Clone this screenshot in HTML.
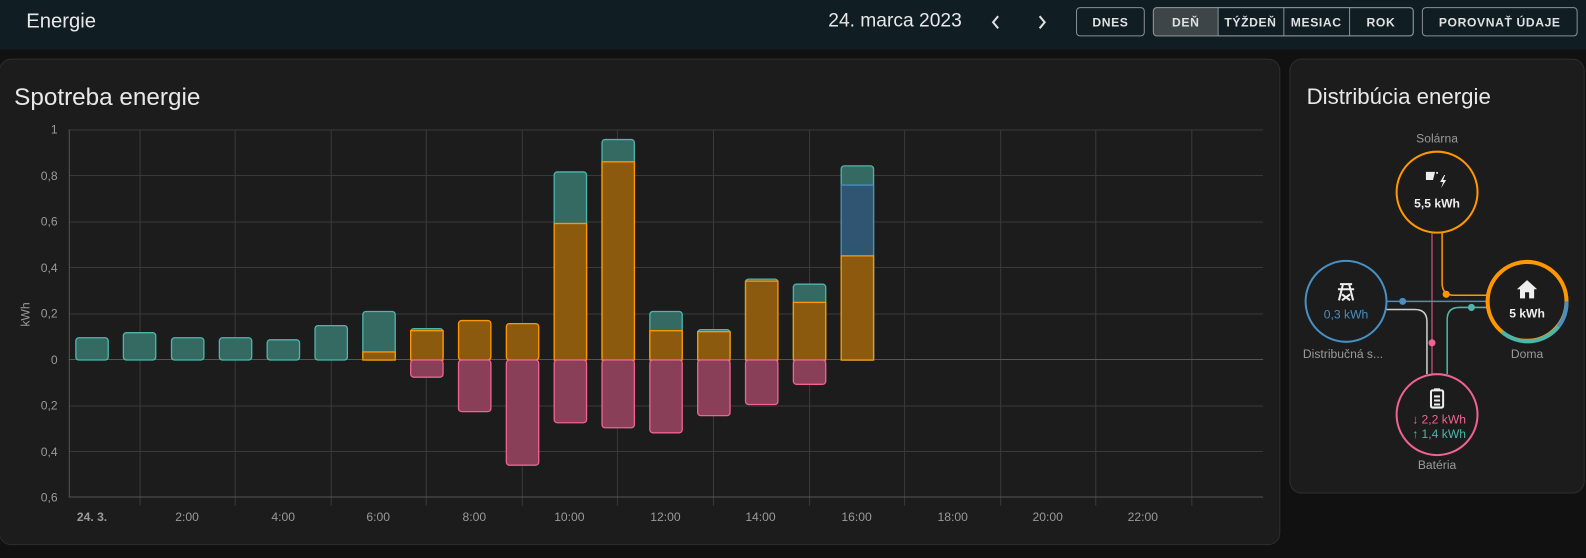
<!DOCTYPE html>
<html><head><meta charset="utf-8"><style>
*{margin:0;padding:0;box-sizing:border-box}
body{width:1586px;height:552px;background:#111111;font-family:"Liberation Sans",sans-serif;color:#e1e1e1;overflow:hidden;position:relative}
#w{position:absolute;left:0;top:0;width:1586px;height:552px;transform:scale(1.0113);transform-origin:0 0}
.hdr{position:absolute;left:0;top:0;width:1600px;height:49px;background:#101d23}
.t{position:absolute;white-space:nowrap}
.btn{position:absolute;top:7px;height:29px;border:1px solid #8a9094;border-radius:4px;font-size:12px;font-weight:bold;letter-spacing:0.6px;color:#e1e1e1;display:flex;align-items:center;justify-content:center}
.card{position:absolute;background:#1c1c1c;border:1px solid #2e2e2e;border-radius:12px}
</style></head><body><div id="w">
<div class="hdr"></div>
<div class="t" style="left:26px;top:10px;font-size:20px;color:#e8e8e8">Energie</div>
<div class="t" style="left:819px;top:10px;font-size:19px;color:#e8e8e8">24. marca 2023</div>
<svg style="position:absolute;left:975px;top:12px" width="70" height="20"><path d="M12 4 L7 10 L12 16" stroke="#e1e1e1" stroke-width="2" fill="none"/><path d="M53 4 L58 10 L53 16" stroke="#e1e1e1" stroke-width="2" fill="none"/></svg>
<div class="btn" style="left:1064px;width:68px">DNES</div>
<div class="btn" style="left:1140px;width:258px;padding:0"></div>
<div class="btn" style="left:1140px;width:65px;background:#3d4548;border-radius:4px 0 0 4px">DEŇ</div>
<div class="btn" style="left:1204px;width:66px;border-width:1px 1px 1px 0;border-radius:0">TÝŽDEŇ</div>
<div class="btn" style="left:1269px;width:66px;border-width:1px 1px 1px 0;border-radius:0">MESIAC</div>
<div class="btn" style="left:1334px;width:64px;border-width:1px 1px 1px 0;border-radius:0 4px 4px 0">ROK</div>
<div class="btn" style="left:1406px;width:154px">POROVNAŤ ÚDAJE</div>

<div class="card" style="left:-1px;top:58px;width:1267px;height:481px"></div>
<div class="t" style="left:14px;top:83px;font-size:24px;color:#e8e8e8">Spotreba energie</div>
<svg style="position:absolute;left:0;top:0" width="1270" height="552" font-family="Liberation Sans" font-size="12" fill="#9a9a9a">
<g stroke="#3a3a3a" stroke-width="1">
<line x1="68" y1="128.5" x2="1249" y2="128.5"/><line x1="68" y1="173.5" x2="1249" y2="173.5"/><line x1="68" y1="219.5" x2="1249" y2="219.5"/><line x1="68" y1="264.5" x2="1249" y2="264.5"/><line x1="68" y1="310.5" x2="1249" y2="310.5"/><line x1="68" y1="401.5" x2="1249" y2="401.5"/><line x1="68" y1="446.5" x2="1249" y2="446.5"/>
<line x1="138.5" y1="128" x2="138.5" y2="500"/><line x1="232.5" y1="128" x2="232.5" y2="500"/><line x1="327.5" y1="128" x2="327.5" y2="500"/><line x1="421.5" y1="128" x2="421.5" y2="500"/><line x1="516.5" y1="128" x2="516.5" y2="500"/><line x1="610.5" y1="128" x2="610.5" y2="500"/><line x1="705.5" y1="128" x2="705.5" y2="500"/><line x1="800.5" y1="128" x2="800.5" y2="500"/><line x1="894.5" y1="128" x2="894.5" y2="500"/><line x1="989.5" y1="128" x2="989.5" y2="500"/><line x1="1083.5" y1="128" x2="1083.5" y2="500"/><line x1="1178.5" y1="128" x2="1178.5" y2="500"/>
</g>
<g stroke="#555" stroke-width="1"><line x1="68.5" y1="128" x2="68.5" y2="492"/><line x1="68" y1="491.5" x2="1249" y2="491.5"/><line x1="68" y1="355.5" x2="1249" y2="355.5"/></g>
<g text-anchor="end"><text x="57" y="132">1</text><text x="57" y="178">0,8</text><text x="57" y="223">0,6</text><text x="57" y="269">0,4</text><text x="57" y="314">0,2</text><text x="57" y="360">0</text><text x="57" y="405">0,2</text><text x="57" y="451">0,4</text><text x="57" y="496">0,6</text></g>
<text transform="translate(29,311) rotate(-90)" text-anchor="middle">kWh</text>
<g text-anchor="middle"><text x="91" y="515" font-weight="bold">24. 3.</text><text x="185" y="515">2:00</text><text x="280" y="515">4:00</text><text x="374" y="515">6:00</text><text x="469" y="515">8:00</text><text x="563" y="515">10:00</text><text x="658" y="515">12:00</text><text x="752" y="515">14:00</text><text x="847" y="515">16:00</text><text x="942" y="515">18:00</text><text x="1036" y="515">20:00</text><text x="1130" y="515">22:00</text></g>
<g stroke-width="1.3">
<g fill="#356a63" stroke="#4db6ac">
<rect x="75" y="334" width="32" height="22" rx="3"/><rect x="122" y="329" width="32" height="27" rx="3"/><rect x="169.6" y="334" width="32" height="22" rx="3"/><rect x="216.9" y="334" width="32" height="22" rx="3"/><rect x="264.2" y="336" width="32" height="20" rx="3"/><rect x="311.5" y="322" width="32" height="34" rx="3"/><rect x="358.8" y="308" width="32" height="48" rx="3"/><rect x="406.1" y="325" width="32" height="31" rx="3"/><rect x="548" y="170" width="32" height="186" rx="3"/><rect x="595.3" y="138" width="32" height="218" rx="3"/><rect x="642.6" y="308" width="32" height="48" rx="3"/><rect x="689.9" y="326" width="32" height="30" rx="3"/><rect x="737.2" y="276" width="32" height="80" rx="3"/><rect x="784.5" y="281" width="32" height="75" rx="3"/><rect x="831.8" y="164" width="32" height="192" rx="3"/>
</g>
<rect x="831.8" y="183" width="32" height="173" fill="#2f5572" stroke="#488fc2"/>
<g fill="#8c5a0f" stroke="#ff9800">
<rect x="358.8" y="348" width="32" height="8"/><rect x="406.1" y="327" width="32" height="29"/><rect x="453.4" y="317" width="32" height="39" rx="3"/><rect x="500.7" y="320" width="32" height="36" rx="3"/><rect x="548" y="221" width="32" height="135"/><rect x="595.3" y="160" width="32" height="196"/><rect x="642.6" y="327" width="32" height="29"/><rect x="689.9" y="328" width="32" height="28"/><rect x="737.2" y="278" width="32" height="78"/><rect x="784.5" y="299" width="32" height="57"/><rect x="831.8" y="253" width="32" height="103"/>
</g>
<g fill="#8a3f58" stroke="#f06292">
<rect x="406.1" y="356" width="32" height="17" rx="3"/><rect x="453.4" y="356" width="32" height="51" rx="3"/><rect x="500.7" y="356" width="32" height="104" rx="3"/><rect x="548" y="356" width="32" height="62" rx="3"/><rect x="595.3" y="356" width="32" height="67" rx="3"/><rect x="642.6" y="356" width="32" height="72" rx="3"/><rect x="689.9" y="356" width="32" height="55" rx="3"/><rect x="737.2" y="356" width="32" height="44" rx="3"/><rect x="784.5" y="356" width="32" height="24" rx="3"/>
</g></g>
</svg>

<div class="card" style="left:1275px;top:58px;width:292px;height:430px"></div>
<div class="t" style="left:1292px;top:83px;font-size:22px;color:#e8e8e8">Distribúcia energie</div>
<svg style="position:absolute;left:1275px;top:100px" width="292" height="380" font-family="Liberation Sans" text-anchor="middle">
<g fill="none" stroke-width="1.5">
<line x1="141" y1="130" x2="141" y2="270" stroke="#b0476b"/>
<path d="M151 130 V180 Q151 192 163 192 H195" stroke="#ff9800"/>
<line x1="96" y1="198" x2="195" y2="198" stroke="#488fc2"/>
<path d="M96 206 H124 Q136 206 136 218 V270" stroke="#cfcfcf"/>
<path d="M195 204 H168 Q156 204 156 216 V270" stroke="#4db6ac"/>
</g>
<circle cx="155" cy="191" r="3.5" fill="#ff9800"/><circle cx="112" cy="198" r="3.5" fill="#488fc2"/><circle cx="180" cy="204" r="3.5" fill="#4db6ac"/><circle cx="141" cy="239" r="3.5" fill="#f06292"/>
<circle cx="146" cy="90" r="40" fill="#1c1c1c" stroke="#ff9800" stroke-width="2"/>
<circle cx="56" cy="198" r="40" fill="#1c1c1c" stroke="#488fc2" stroke-width="2"/>
<circle cx="146" cy="310" r="40" fill="#1c1c1c" stroke="#f06292" stroke-width="2"/>
<circle cx="235" cy="198" r="39" fill="#1c1c1c" stroke="#ff9800" stroke-width="4"/>
<path d="M266 223 A39 39 0 0 1 210 228" fill="none" stroke="#4db6ac" stroke-width="4"/>
<path d="M274 198 A39 39 0 0 1 266 223" fill="none" stroke="#488fc2" stroke-width="4"/>
<text x="146" y="41" font-size="12" fill="#9a9a9a">Solárna</text>
<path d="M135 70 h9 l-2 8 h-7 z" fill="#eee"/><circle cx="146" cy="71" r="1" fill="#eee"/><path d="M153 73 l-4 7 h3 l-2 6 l5 -8 h-3 l2 -5z" fill="#eee"/>
<text x="146" y="105" font-size="12" font-weight="bold" fill="#eee">5,5 kWh</text>
<path d="M50 181 h12 M48 186 h16 M53 181 l-4 16 M59 181 l4 16 M52 191 l8 6 M60 191 l-8 6" stroke="#eee" stroke-width="2" fill="none"/>
<text x="56" y="215" font-size="12" fill="#488fc2">0,3 kWh</text>
<text x="53" y="254" font-size="12" fill="#9a9a9a">Distribučná s...</text>
<path d="M228 186 v9 h5 v-6 h4 v6 h5 v-9 h3 l-10 -9 l-10 9z" fill="#eee"/>
<text x="235" y="214" font-size="12" font-weight="bold" fill="#eee">5 kWh</text>
<text x="235" y="254" font-size="12" fill="#9a9a9a">Doma</text>
<rect x="140" y="286" width="12" height="17" rx="1.5" fill="none" stroke="#eee" stroke-width="2"/><rect x="143" y="284" width="6" height="2" fill="#eee"/><path d="M143 292 h6 M143 296 h6 M143 300 h6" stroke="#eee" stroke-width="2"/>
<text x="148" y="319" font-size="12" fill="#f06292">↓ 2,2 kWh</text>
<text x="148" y="333" font-size="12" fill="#4db6ac">↑ 1,4 kWh</text>
<text x="146" y="364" font-size="12" fill="#9a9a9a">Batéria</text>
</svg>
</div></body></html>
